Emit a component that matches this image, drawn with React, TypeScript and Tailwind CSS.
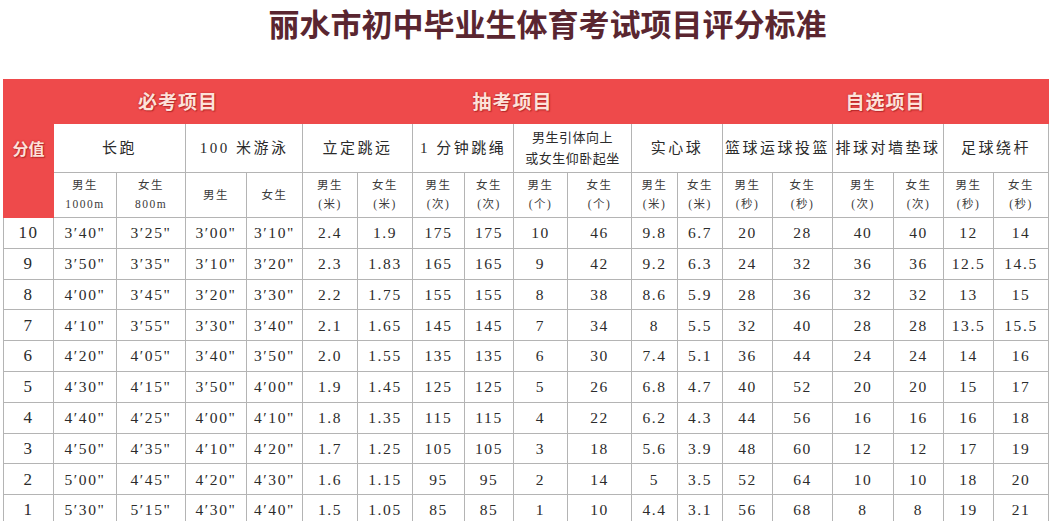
import { FC } from "react";

const colWidths = [
  "w-[50px]", "w-[63px]", "w-[69px]", "w-[61px]", "w-[56px]", "w-[55px]", "w-[55px]",
  "w-[52px]", "w-[49px]", "w-[54px]", "w-[64px]", "w-[46px]", "w-[45px]", "w-[50px]",
  "w-[60px]", "w-[61px]", "w-[50px]", "w-[50px]", "w-[55px]",
];

interface EventCol {
  name: string[];
  subs: string[][];
}

const events: EventCol[] = [
  { name: ["长跑"], subs: [["男生", "1000m"], ["女生", "800m"]] },
  { name: ["100 米游泳"], subs: [["男生"], ["女生"]] },
  { name: ["立定跳远"], subs: [["男生", "(米)"], ["女生", "(米)"]] },
  { name: ["1 分钟跳绳"], subs: [["男生", "(次)"], ["女生", "(次)"]] },
  { name: ["男生引体向上", "或女生仰卧起坐"], subs: [["男生", "(个)"], ["女生", "(个)"]] },
  { name: ["实心球"], subs: [["男生", "(米)"], ["女生", "(米)"]] },
  { name: ["篮球运球投篮"], subs: [["男生", "(秒)"], ["女生", "(秒)"]] },
  { name: ["排球对墙垫球"], subs: [["男生", "(次)"], ["女生", "(次)"]] },
  { name: ["足球绕杆"], subs: [["男生", "(秒)"], ["女生", "(秒)"]] },
];

const rows: string[][] = [
  ["10", "3′40\"", "3′25\"", "3′00\"", "3′10\"", "2.4", "1.9", "175", "175", "10", "46", "9.8", "6.7", "20", "28", "40", "40", "12", "14"],
  ["9", "3′50\"", "3′35\"", "3′10\"", "3′20\"", "2.3", "1.83", "165", "165", "9", "42", "9.2", "6.3", "24", "32", "36", "36", "12.5", "14.5"],
  ["8", "4′00\"", "3′45\"", "3′20\"", "3′30\"", "2.2", "1.75", "155", "155", "8", "38", "8.6", "5.9", "28", "36", "32", "32", "13", "15"],
  ["7", "4′10\"", "3′55\"", "3′30\"", "3′40\"", "2.1", "1.65", "145", "145", "7", "34", "8", "5.5", "32", "40", "28", "28", "13.5", "15.5"],
  ["6", "4′20\"", "4′05\"", "3′40\"", "3′50\"", "2.0", "1.55", "135", "135", "6", "30", "7.4", "5.1", "36", "44", "24", "24", "14", "16"],
  ["5", "4′30\"", "4′15\"", "3′50\"", "4′00\"", "1.9", "1.45", "125", "125", "5", "26", "6.8", "4.7", "40", "52", "20", "20", "15", "17"],
  ["4", "4′40\"", "4′25\"", "4′00\"", "4′10\"", "1.8", "1.35", "115", "115", "4", "22", "6.2", "4.3", "44", "56", "16", "16", "16", "18"],
  ["3", "4′50\"", "4′35\"", "4′10\"", "4′20\"", "1.7", "1.25", "105", "105", "3", "18", "5.6", "3.9", "48", "60", "12", "12", "17", "19"],
  ["2", "5′00\"", "4′45\"", "4′20\"", "4′30\"", "1.6", "1.15", "95", "95", "2", "14", "5", "3.5", "52", "64", "10", "10", "18", "20"],
  ["1", "5′30\"", "5′15\"", "4′30\"", "4′40\"", "1.5", "1.05", "85", "85", "1", "10", "4.4", "3.1", "56", "68", "8", "8", "19", "21"],
];

const redText = "font-bold text-[#fde2da] [text-shadow:0_0_2px_#b82a2c,1px_1px_1px_#b82a2c]";

const ScoreTable: FC = () => {
  return (
    <table className="ml-[3px] w-[1045px] table-fixed border-collapse font-['Liberation_Serif','Noto_Sans_CJK_SC',serif] text-[#2b2b2b]">
      <colgroup>
        {colWidths.map((w, i) => (
          <col key={i} className={w} />
        ))}
      </colgroup>
      <thead>
        <tr className="h-[44px] bg-[#ee4a4b]">
          <th rowSpan={3} className="border border-[#ee4a4b] bg-[#ee4a4b] p-0 align-middle">
            <span className={`${redText} font-['Noto_Sans_CJK_SC',sans-serif] text-[16px]`}>分值</span>
          </th>
          <th colSpan={4} className="border border-[#ee4a4b] p-0">
            <span className={`${redText} font-['Noto_Sans_CJK_SC',sans-serif] text-[19px] tracking-[1px]`}>必考项目</span>
          </th>
          <th colSpan={8} className="border border-[#ee4a4b] p-0">
            <span className={`${redText} font-['Noto_Sans_CJK_SC',sans-serif] text-[19px] tracking-[1px]`}>抽考项目</span>
          </th>
          <th colSpan={6} className="border border-[#ee4a4b] p-0">
            <span className={`${redText} font-['Noto_Sans_CJK_SC',sans-serif] text-[19px] tracking-[1px]`}>自选项目</span>
          </th>
        </tr>
        <tr className="h-[49px]">
          {events.map((ev) => (
            <th
              key={ev.name.join("")}
              colSpan={2}
              className="border border-[#b4b4b4] p-0 text-center align-middle font-normal"
            >
              {ev.name.length > 1 ? (
                <div className="flex flex-col items-center text-[13px] leading-[21px] tracking-[0.5px]">
                  {ev.name.map((n) => (
                    <span key={n}>{n}</span>
                  ))}
                </div>
              ) : (
                <span className="text-[15px] tracking-[2.5px]">{ev.name[0]}</span>
              )}
            </th>
          ))}
        </tr>
        <tr className="h-[45px]">
          {events.flatMap((ev) =>
            ev.subs.map((s, i) => (
              <th
                key={ev.name.join("") + i}
                className="border border-[#b4b4b4] p-0 text-center align-middle font-normal"
              >
                <div className="flex flex-col items-center text-[11.5px] leading-[19px] tracking-[1.5px] text-[#3a3a3a]">
                  {s.map((t) => (
                    <span key={t}>{t}</span>
                  ))}
                </div>
              </th>
            ))
          )}
        </tr>
      </thead>
      <tbody>
        {rows.map((r) => (
          <tr key={r[0]} className="h-[30.8px]">
            {r.map((v, i) => (
              <td
                key={i}
                className={
                  i === 0
                    ? "border border-[#b4b4b4] p-0 text-center text-[17px] font-medium tracking-[1.5px]"
                    : "border border-[#b4b4b4] p-0 text-center text-[15.5px] tracking-[1.6px]"
                }
              >
                {v}
              </td>
            ))}
          </tr>
        ))}
      </tbody>
    </table>
  );
};

export default function App() {
  return (
    <div className="h-screen w-full overflow-hidden bg-white">
      <div className="flex h-[79px] justify-center pl-[44px]">
        <h1 className="mt-[3px] font-['Noto_Sans_CJK_SC',sans-serif] text-[31px] font-semibold leading-[40px] text-[#5a2630]">
          丽水市初中毕业生体育考试项目评分标准
        </h1>
      </div>
      <ScoreTable />
    </div>
  );
}
